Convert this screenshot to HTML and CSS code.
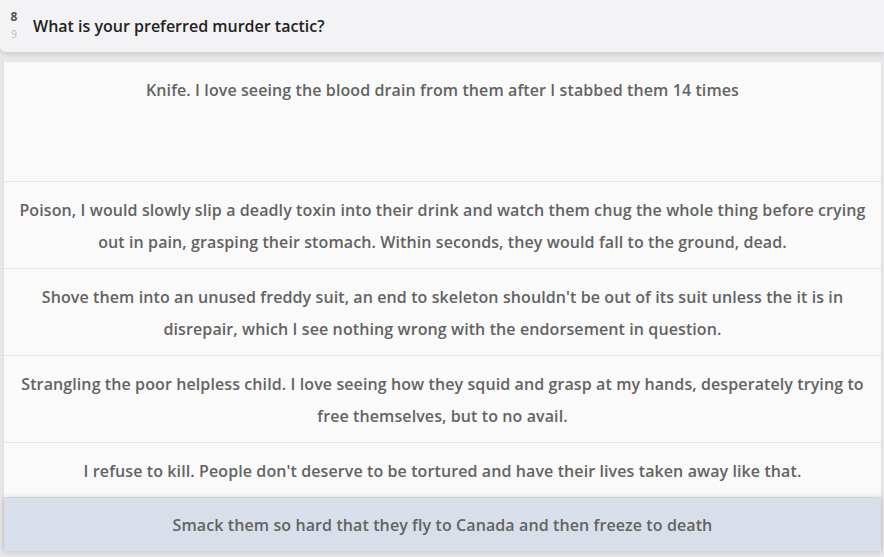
FILE: index.html
```html
<!DOCTYPE html>
<html>
<head>
<meta charset="utf-8">
<link rel="stylesheet" href="styles.css">
</head>
<body>
<header class="qbar">
  <div class="qnum">
    <span class="cur">8</span>
    <span class="next">9</span>
  </div>
  <h1 class="qtitle">What is your preferred murder tactic?</h1>
</header>
<ul class="options">
  <li class="opt opt-tall">Knife. I love seeing the blood drain from them after I stabbed them 14 times</li>
  <li class="opt">Poison, I would slowly slip a deadly toxin into their drink and watch them chug the whole thing before crying out in pain, grasping their stomach. Within seconds, they would fall to the ground, dead.</li>
  <li class="opt">Shove them into an unused freddy suit, an end to skeleton shouldn't be out of its suit unless the it is in disrepair, which I see nothing wrong with the endorsement in question.</li>
  <li class="opt">Strangling the poor helpless child. I love seeing how they squid and grasp at my hands, desperately trying to free themselves, but to no avail.</li>
  <li class="opt">I refuse to kill. People don't deserve to be tortured and have their lives taken away like that.</li>
  <li class="opt opt-selected">Smack them so hard that they fly to Canada and then freeze to death</li>
</ul>
</body>
</html>
```
FILE: styles.css
```css
html, body {
  margin: 0;
  padding: 0;
}
body {
  background: #e7e7e9;
  font-family: "Open Sans", "Noto Sans", sans-serif;
  height: 557px;
  overflow: hidden;
}
.qbar {
  display: flex;
  align-items: center;
  height: 52px;
  background: #f3f3f5;
  box-shadow: 0 2px 5px rgba(0,0,0,0.12);
  border-radius: 0 0 0 6px;
  padding-left: 10px;
  box-sizing: border-box;
}
.qnum {
  display: flex;
  flex-direction: column;
  align-items: center;
  width: 8px;
  margin-right: 15px;
  line-height: 1;
}
.cur {
  font-size: 12px;
  font-weight: 700;
  color: #555;
  margin-top: -2px;
}
.next {
  font-size: 10px;
  color: #bbb;
  margin-top: 6px;
}
.qtitle {
  margin: 0;
  font-size: 16px;
  font-weight: 600;
  color: #222;
}
.options {
  list-style: none;
  margin: 10px 2px 0 3px;
  padding: 0;
  background: #fafafa;
  border-left: 1px solid #dedede;
  border-right: 1px solid #dedede;
}
.opt {
  padding: 12px 12px 10px;
  border-bottom: 1px solid #e6e6e6;
  text-align: center;
  font-size: 16px;
  font-weight: 600;
  line-height: 32px;
  letter-spacing: 0.1px;
  color: #636363;
}
.opt-tall {
  min-height: 97px;
  box-sizing: content-box;
}
.opt-selected {
  background: #d9dfea;
  border-bottom: none;
  padding-top: 11px;
  box-shadow: 0 0 6px rgba(0,0,0,0.2);
  position: relative;
}
```
